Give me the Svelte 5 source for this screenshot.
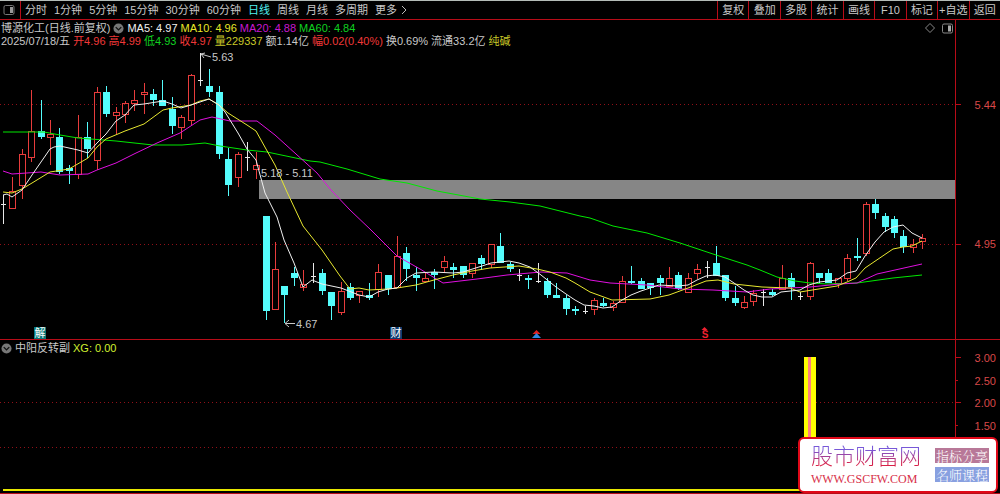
<script lang="ts">
  type Candle = [kind: string, high: number, top: number, bottom: number, low: number]

  const periods = ['分时', '1分钟', '5分钟', '15分钟', '30分钟', '60分钟', '日线', '周线', '月线', '多周期', '更多']
  const tools = ['复权', '叠加', '多股', '统计', '画线', 'F10', '标记', '+自选', '返回']
  let period = $state('日线')

  const averages = [
    { text: 'MA5: 4.97', color: 'white' },
    { text: 'MA10: 4.96', color: 'yellow' },
    { text: 'MA20: 4.88', color: 'magenta' },
    { text: 'MA60: 4.84', color: 'green' }
  ]

  const quote = [
    { text: '2025/07/18/五', color: 'gray' },
    { text: '开4.96', color: 'red' },
    { text: '高4.99', color: 'red' },
    { text: '低4.93', color: 'green' },
    { text: '收4.97', color: 'red' },
    { text: '量229337', color: 'olive' },
    { text: '额1.14亿', color: 'gray' },
    { text: '幅0.02(0.40%)', color: 'red' },
    { text: '换0.69%', color: 'gray' },
    { text: '流通33.2亿', color: 'gray' },
    { text: '纯碱', color: 'olive' }
  ]

  // u = up, d = down, f = flat
  const candles: Candle[] = [
    ['f', 195, 204, 204, 224], ['u', 177, 191, 208, 208], ['u', 149, 154, 185, 199],
    ['u', 90, 131, 157, 162], ['d', 100, 131, 137, 139], ['u', 120, 134, 137, 165],
    ['d', 128, 137, 172, 174], ['d', 165, 168, 171, 184], ['u', 115, 137, 174, 179],
    ['d', 122, 137, 149, 158], ['u', 87, 92, 160, 170], ['d', 86, 92, 114, 117],
    ['u', 107, 112, 115, 134], ['u', 101, 103, 114, 123], ['u', 90, 100, 103, 111],
    ['u', 83, 92, 94, 114], ['d', 89, 94, 100, 106], ['d', 80, 100, 106, 106],
    ['d', 97, 109, 126, 134], ['u', 115, 117, 127, 139], ['u', 74, 75, 120, 125],
    ['f', 53, 80, 80, 86], ['d', 69, 86, 92, 97], ['d', 86, 92, 154, 159],
    ['d', 148, 159, 185, 196], ['u', 152, 154, 177, 187], ['f', 142, 157, 157, 171],
    ['u', 152, 165, 169, 179], ['d', 216, 216, 311, 320], ['u', 242, 269, 309, 309],
    ['d', 286, 286, 295, 323], ['d', 267, 273, 278, 286], ['u', 270, 284, 287, 291],
    ['f', 263, 276, 276, 283], ['d', 269, 273, 291, 295], ['d', 292, 292, 306, 320],
    ['u', 282, 291, 312, 315], ['d', 283, 287, 298, 300], ['u', 291, 291, 295, 303],
    ['d', 283, 295, 298, 300], ['u', 264, 272, 289, 297], ['d', 275, 275, 289, 295],
    ['u', 236, 256, 287, 287], ['d', 247, 253, 269, 281], ['d', 267, 275, 278, 291],
    ['u', 273, 278, 281, 282], ['d', 269, 272, 275, 289], ['u', 256, 261, 267, 272],
    ['d', 263, 267, 270, 278], ['d', 266, 266, 275, 278], ['u', 263, 263, 273, 278],
    ['d', 255, 258, 264, 270], ['u', 244, 244, 264, 268], ['d', 233, 246, 263, 263],
    ['d', 262, 264, 269, 272], ['f', 269, 275, 275, 281], ['d', 275, 278, 280, 289],
    ['f', 263, 281, 281, 283], ['d', 278, 281, 295, 298], ['d', 283, 295, 298, 298],
    ['d', 295, 298, 309, 315], ['d', 306, 309, 311, 315], ['f', 306, 311, 311, 314],
    ['u', 298, 300, 309, 315], ['d', 298, 303, 306, 307], ['u', 301, 303, 307, 311],
    ['u', 276, 281, 302, 302], ['d', 266, 281, 283, 284], ['d', 278, 281, 289, 289],
    ['d', 283, 283, 288, 295], ['d', 275, 278, 283, 295], ['u', 267, 278, 286, 286],
    ['d', 272, 275, 289, 290], ['u', 273, 278, 292, 292], ['u', 264, 269, 273, 279],
    ['f', 261, 267, 267, 278], ['d', 246, 263, 276, 276], ['d', 275, 275, 298, 301],
    ['d', 286, 298, 303, 306], ['u', 296, 302, 307, 309], ['u', 290, 293, 301, 306],
    ['f', 289, 292, 292, 306], ['d', 289, 292, 295, 296], ['u', 265, 278, 289, 289],
    ['d', 273, 278, 287, 300], ['f', 292, 296, 296, 300], ['u', 262, 263, 296, 300],
    ['d', 273, 273, 278, 283], ['d', 269, 273, 283, 283], ['u', 278, 278, 283, 288],
    ['u', 254, 258, 278, 281], ['d', 238, 256, 258, 261], ['u', 202, 204, 253, 256],
    ['d', 199, 204, 213, 219], ['d', 213, 216, 227, 232], ['d', 216, 219, 233, 238],
    ['d', 230, 236, 247, 253], ['u', 239, 244, 247, 253], ['u', 234, 238, 241, 249]
  ]

  const lines = [
    {
      color: '#00e800',
      points:
        '3,132 44,132 60,135 78,138 116,141 153,145 182,145 205,143 220,146 247,150 267,152 310,161 320,162 347,169 380,179 407,183 437,191 480,199 510,202 540,206 560,211 580,216 590,218 613,226 647,233 680,243 713,254 747,265 760,270 777,277 795,281 810,283 827,284 857,283 893,278 922,275'
    },
    {
      color: '#e010e0',
      points:
        '3,171 12,174 41,172 60,175 88,174 97,170 116,163 134,154 157,143 180,133 200,120 212,117 230,121 257,121 275,135 317,173 331,190 350,210 371,230 397,256 420,269 443,283 477,279 507,275 541,272 567,273 590,280 610,283 647,285 680,289 713,290 747,292 770,289 810,287 840,284 857,283 877,274 922,264'
    },
    {
      color: '#e8e830',
      points:
        '3,192 12,193 22,189 32,183 50,172 69,169 88,158 97,147 106,139 125,131 144,124 163,110 172,108 191,105 200,101 209,99 219,105 228,113 247,125 256,131 266,149 275,165 287,192 303,226 322,250 340,276 350,289 359,288 369,290 388,289 397,288 416,285 434,280 453,275 472,271 490,268 519,266 537,269 550,272 566,278 575,283 590,292 612,300 650,299 669,295 688,288 706,281 718,280 734,284 762,287 790,288 800,292 837,286 847,282 856,278 865,268 893,249 903,247 912,246 922,241'
    },
    {
      color: '#f0f0f0',
      points:
        '3,195 7,194 12,197 22,190 32,175 50,149 54,147 60,146 69,148 78,150 88,153 97,143 106,134 116,121 125,115 134,105 144,104 163,101 172,104 181,108 191,105 209,99 219,105 225,112 238,133 247,149 256,160 265,193 277,217 284,240 294,263 303,287 312,280 322,284 341,288 359,295 369,297 378,292 388,289 397,288 407,278 416,273 434,272 453,273 463,272 482,266 491,263 509,261 519,263 530,267 541,275 556,287 566,294 575,300 584,305 594,306 603,308 612,307 622,300 631,295 641,291 659,285 678,286 688,285 697,280 706,276 715,275 725,277 734,283 744,290 753,295 762,297 772,297 781,292 800,290 809,285 819,282 837,280 847,273 856,271 865,256 875,242 884,232 893,227 903,225 912,233 922,238'
    }
  ]

  const levels = [
    { y: 357, label: '3.00' },
    { y: 380, label: '2.50' },
    { y: 402, label: '2.00' },
    { y: 425, label: '1.50' }
  ]

  const xOf = (i: number) => Math.round(3 + i * 9.38)
</script>

{#snippet toggle()}
  <svg class="toggle" viewBox="0 0 12 12" aria-hidden="true">
    <circle cx="6" cy="6" r="5.5" fill="#777" />
    <path d="M3 4.5 6 7.5 9 4.5" fill="none" stroke="#111" stroke-width="1.5" />
  </svg>
{/snippet}

<main>
  <nav class="toolbar">
    <button class="panel-btn" aria-label="侧栏">
      <svg viewBox="0 0 12 12" width="12" height="12">
        <rect x="1" y="1.5" width="10" height="9" rx="1.5" fill="none" stroke="#777" />
        <path d="M7 3H10V9H7Z" fill="#999" />
      </svg>
    </button>
    <div class="periods">
      {#each periods as item}
        <button class:active={item === period} onclick={() => (period = item)}>
          {item}{#if item === '更多'}<svg class="more" viewBox="0 0 6 10" width="6" height="10"><path d="M1 1 5 5 1 9" fill="none" stroke="#bbb" /></svg>{/if}
        </button>
      {/each}
    </div>
    <div class="tools">
      {#each tools as item}
        <button>{item}</button>
      {/each}
    </div>
  </nav>

  <section class="pane">
    <div class="legend">
      <div class="row">
        <span class="gray">博源化工(日线.前复权)</span>
        <button class="toggle-btn" aria-label="主图指标">{@render toggle()}</button>
        {#each averages as item}
          <span class={item.color}>{item.text}</span>
        {/each}
      </div>
      <div class="row">
        {#each quote as item}
          <span class={item.color}>{item.text}</span>
        {/each}
      </div>
    </div>

    <svg class="chart" viewBox="0 20 1000 319">
      <rect x="259" y="180" width="696" height="19" fill="#868686" />
      <g class="grid">
        <path d="M0 104.5H956M0 244.5H956" />
      </g>
      <g class="axis">
        <path d="M955.5 20V340M956 104.5H961M956 244.5H961" />
        <text x="996" y="109">5.44</text>
        <text x="996" y="248">4.95</text>
      </g>

      <g shape-rendering="crispEdges">
        {#each candles as [kind, high, top, bottom, low], i}
          {@const x = xOf(i)}
          {#if kind === 'u'}
            <path d="M{x + 0.5} {high}V{top}M{x + 0.5} {bottom}V{low}" stroke="#e83c3c" />
            <rect x={x - 2.5} y={top + 0.5} width="6" height={bottom - top} fill="none" stroke="#e83c3c" />
          {:else if kind === 'd'}
            <path d="M{x + 0.5} {high}V{low}" stroke="#54fcfc" />
            <rect x={x - 3} y={top} width="7" height={bottom - top} fill="#54fcfc" />
          {:else}
            <path d="M{x + 0.5} {high}V{low}M{x - 2} {top + 0.5}H{x + 3}" stroke="#e8e8e8" />
          {/if}
        {/each}
      </g>

      {#each lines as line}
        <polyline points={line.points} fill="none" stroke={line.color} />
      {/each}

      <g class="notes">
        <path d="M201 54 211 57M201 54 205 53M201 54 204 58M285 323.5H295M285 323.5 289 320M285 323.5 289 327" />
        <text x="212" y="61">5.63</text>
        <text x="261" y="177">5.18 - 5.11</text>
        <text x="296" y="328">4.67</text>
      </g>

      <g class="badges">
        <rect x="34" y="327" width="12" height="12" fill="#087878" />
        <text x="40" y="337">解</text>
        <rect x="390" y="327" width="12" height="12" fill="#0c3c70" />
        <text x="396" y="337">财</text>
        <path d="M536.5 330 540.5 334H532.5Z" fill="#e02020" />
        <path d="M536.5 333 541 338H532Z" fill="#3088e0" />
        <path d="M704.5 327 707.5 330H701.5Z" fill="#f02030" />
        <text class="dollar" x="705" y="338">S</text>
      </g>

      <g fill="none" stroke="#888">
        <path d="M930 23.5 934.5 28 930 32.5 925.5 28Z" />
        <rect x="942.5" y="24" width="10" height="9" rx="1.5" />
        <path d="M948 25.5H951V31.5H948Z" fill="#aaa" stroke="none" />
      </g>
    </svg>
  </section>

  <section class="pane lower">
    <div class="legend">
      <div class="row">
        <button class="toggle-btn" aria-label="副图指标">{@render toggle()}</button>
        <span class="gray">中阳反转副</span>
        <span class="lime">XG: 0.00</span>
      </div>
    </div>
    <svg class="chart" viewBox="0 340 1000 153">
      <g class="grid">
        <path d="M0 402.5H956M0 447.5H956" />
      </g>
      <g class="axis">
        <path d="M955.5 340V492" />
        {#each levels as level, i}
          <path d="M956 {level.y + 0.5}H{i % 2 ? 958 : 961}" />
          <text x="996" y={level.y + 5}>{level.label}</text>
        {/each}
      </g>
      <rect x="804" y="357" width="12" height="134" fill="#ffff00" />
      <rect x="808" y="357" width="3" height="134" fill="#ff8080" />
      <rect x="3" y="489" width="920" height="2" fill="#e8e800" />
    </svg>

    <a class="brand" href="#home">
      <span class="name">
        <strong>股市财富网</strong>
        <small>WWW.GSCFW.COM</small>
      </span>
      <span class="tags">
        <span>指标分享</span>
        <span class="blue">名师课程</span>
      </span>
    </a>
  </section>
</main>

<style>
  :global(body) {
    background: #000;
  }

  main {
    background: #000;
    color: #c8c8c8;
    font: 11px/13px 'Liberation Sans', 'Noto Sans CJK SC', sans-serif;
    overflow: hidden;
  }

  button {
    margin: 0;
    padding: 0;
    border: 0;
    background: transparent;
    color: inherit;
    font: inherit;
    white-space: nowrap;
    cursor: pointer;
  }

  .toolbar {
    display: flex;
    height: 18px;
    border-top: 1px solid #b4bcb8;
    border-bottom: 1px solid #b80c18;
  }

  .panel-btn {
    display: flex;
    align-items: center;
    padding: 0 5px 0 3px;
    border-right: 1px solid #b80c18;
  }

  .periods {
    display: flex;
    flex: 1;
    align-items: center;
    gap: 7px;
    padding-left: 4px;
  }

  .periods .active {
    color: #50f0f0;
  }

  .more {
    margin-left: 4px;
    vertical-align: -1px;
  }

  .tools {
    display: grid;
    grid-template-columns: repeat(9, 1fr);
    width: 283px;
  }

  .tools button {
    border-left: 1px solid #b80c18;
  }

  .pane {
    position: relative;
    border-bottom: 1px solid #b80c18;
  }

  .chart {
    display: block;
    width: 100%;
  }

  .legend {
    position: absolute;
    top: 2px;
    left: 1px;
  }

  .row {
    display: flex;
    align-items: center;
    gap: 3px;
    white-space: nowrap;
  }

  .toggle-btn {
    display: flex;
  }

  .toggle {
    width: 11px;
    height: 11px;
  }

  .gray {
    color: #c8c8c8;
  }

  .white {
    color: #f0f0f0;
  }

  .yellow {
    color: #e8e828;
  }

  .magenta {
    color: #c818d0;
  }

  .green {
    color: #10d020;
  }

  .red {
    color: #f03838;
  }

  .olive {
    color: #c8c828;
  }

  .lime {
    color: #d0f030;
  }

  .grid path {
    fill: none;
    stroke: #901018;
    stroke-dasharray: 1 3;
  }

  .axis path {
    fill: none;
    stroke: #b80c18;
  }

  .axis text {
    fill: #d84848;
    text-anchor: end;
  }

  .notes path {
    fill: none;
    stroke: #c8c8c8;
  }

  .notes text {
    fill: #c8c8c8;
  }

  .badges text {
    fill: #fff;
    text-anchor: middle;
  }

  .badges .dollar {
    fill: #f02030;
    font-size: 10px;
    font-weight: bold;
    line-height: 10px;
  }

  .brand {
    position: absolute;
    right: 2px;
    bottom: 0;
    display: flex;
    align-items: center;
    gap: 14px;
    box-sizing: border-box;
    height: 56px;
    padding: 0 7px 0 11px;
    border: 2px solid #e00818;
    border-radius: 6px;
    background: #fff;
    text-decoration: none;
  }

  .name {
    display: flex;
    flex-direction: column;
    gap: 3px;
  }

  .name strong {
    background: linear-gradient(#7858d8 20%, #d82048 80%);
    background-clip: text;
    color: transparent;
    font-size: 22px;
    font-weight: 300;
    line-height: 24px;
  }

  .name small {
    color: #d83048;
    font: 12px/14px 'Liberation Serif', serif;
  }

  .tags {
    display: flex;
    flex-direction: column;
    gap: 4px;
  }

  .tags span {
    padding: 0 1px;
    background: #b87898;
    color: #fff;
    font-family: 'Noto Serif CJK SC', 'Noto Sans CJK SC', serif;
    font-size: 13px;
    font-weight: 300;
    line-height: 15px;
  }

  .tags .blue {
    background: #88a0e0;
  }
</style>
